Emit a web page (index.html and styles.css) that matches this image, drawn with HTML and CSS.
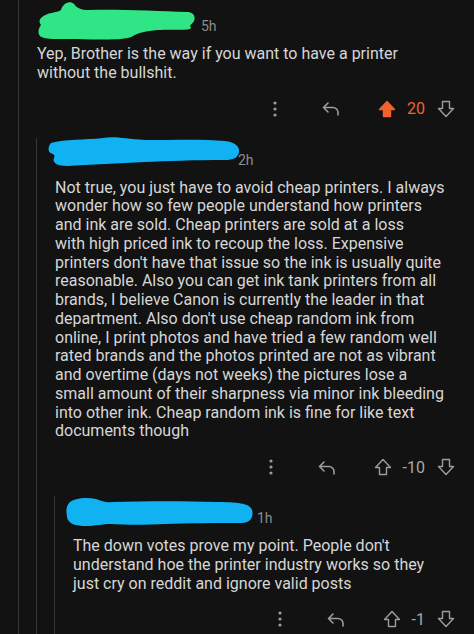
FILE: index.html
```html
<!DOCTYPE html>
<html lang="en">

<head>
    <meta charset="UTF-8">
    <meta name="viewport" content="width=device-width, initial-scale=1.0">
    <title>Comments</title>

    <link rel="stylesheet" href="styles.css">
</head>

<body>

    <section class="thread thread-root">
        <article class="comment">
            <header class="comment-head">
                <span class="user user-a">
                    <svg class="blob blob-a" viewBox="0 0 158 40" width="158" height="40">
                        <path fill="#2fe585"
                            d="M4 18 C10 12 20 13 24 10 C26 3 33 0 37 4 C40 8 44 10 52 10 C80 9 120 11 150 12 C156 12 159 16 157 21 C155 25 152 24 154 28 C152 31 140 29 120 30 C110 31 100 33 96 36 C90 40 70 40 40 39 C20 39 8 40 3 36 C0 32 2 28 4 25 C2 22 2 20 4 18 Z">
                        </path>
                    </svg>
                </span>
                <time class="age">5h</time>
            </header>
            <p class="comment-body">Yep, Brother is the way if you want to have a printer<br>without the bullshit.</p>
            <footer class="actions">
                <span class="more">
                    <svg viewBox="0 0 4 16" width="4" height="16">
                        <circle cx="2" cy="2" r="1.6" fill="currentColor"></circle>
                        <circle cx="2" cy="8" r="1.6" fill="currentColor"></circle>
                        <circle cx="2" cy="14" r="1.6" fill="currentColor"></circle>
                    </svg>
                </span>
                <span class="reply">
                    <svg viewBox="0 0 20 17" width="20" height="17">
                        <path fill="none" stroke="currentColor" stroke-width="1.6" stroke-linecap="round"
                            stroke-linejoin="round" d="M7 3 L2.5 7.5 L7 12 M2.5 7.5 H12 A5 5 0 0 1 17 12.5 V15"></path>
                    </svg>
                </span>
                <span class="vote up voted">
                    <svg viewBox="0 0 18 18" width="18" height="18">
                        <path fill="currentColor" stroke="currentColor" stroke-width="1.4" stroke-linejoin="round"
                            d="M9 1.5 L1.5 9.5 H5.5 V16.5 H12.5 V9.5 H16.5 Z"></path>
                    </svg>
                </span>
                <span class="score voted">20</span>
                <span class="vote down">
                    <svg viewBox="0 0 18 18" width="18" height="18">
                        <path fill="none" stroke="currentColor" stroke-width="1.4" stroke-linejoin="round"
                            d="M9 16.5 L1.5 8.5 H5.5 V1.5 H12.5 V8.5 H16.5 Z"></path>
                    </svg>
                </span>
            </footer>

            <section class="thread">
                <article class="comment">
                    <header class="comment-head">
                        <span class="user user-b">
                            <svg class="blob blob-b" viewBox="0 0 195 32" width="195" height="32">
                                <path fill="#10b2f2"
                                    d="M6 8 C20 4 40 5 58 3 C70 1 80 4 100 5 C130 5 160 4 180 6 C190 7 195 12 194 17 C193 23 188 25 180 25 C150 25 120 26 100 27 C80 28 60 29 40 30 C25 31 14 32 10 28 C6 24 12 22 8 19 C3 18 2 13 6 8 Z">
                                </path>
                            </svg>
                        </span>
                        <time class="age">2h</time>
                    </header>
                    <p class="comment-body">Not true, you just have to avoid cheap printers. I always<br>wonder how so few
                        people understand how printers<br>and ink are sold. Cheap printers are sold at a loss<br>with high
                        priced ink to recoup the loss. Expensive<br>printers don't have that issue so the ink is usually
                        quite<br>reasonable. Also you can get ink tank printers from all<br>brands, I believe Canon is
                        currently the leader in that<br>department. Also don't use cheap random ink from<br>online, I print
                        photos and have tried a few random well<br>rated brands and the photos printed are not as
                        vibrant<br>and overtime (days not weeks) the pictures lose a<br>small amount of their sharpness via
                        minor ink bleeding<br>into other ink. Cheap random ink is fine for like text<br>documents though</p>
                    <footer class="actions">
                        <span class="more">
                            <svg viewBox="0 0 4 16" width="4" height="16">
                                <circle cx="2" cy="2" r="1.6" fill="currentColor"></circle>
                                <circle cx="2" cy="8" r="1.6" fill="currentColor"></circle>
                                <circle cx="2" cy="14" r="1.6" fill="currentColor"></circle>
                            </svg>
                        </span>
                        <span class="reply">
                            <svg viewBox="0 0 20 17" width="20" height="17">
                                <path fill="none" stroke="currentColor" stroke-width="1.6" stroke-linecap="round"
                                    stroke-linejoin="round" d="M7 3 L2.5 7.5 L7 12 M2.5 7.5 H12 A5 5 0 0 1 17 12.5 V15">
                                </path>
                            </svg>
                        </span>
                        <span class="vote up">
                            <svg viewBox="0 0 18 18" width="18" height="18">
                                <path fill="none" stroke="currentColor" stroke-width="1.4" stroke-linejoin="round"
                                    d="M9 1.5 L1.5 9.5 H5.5 V16.5 H12.5 V9.5 H16.5 Z"></path>
                            </svg>
                        </span>
                        <span class="score">-10</span>
                        <span class="vote down">
                            <svg viewBox="0 0 18 18" width="18" height="18">
                                <path fill="none" stroke="currentColor" stroke-width="1.4" stroke-linejoin="round"
                                    d="M9 16.5 L1.5 8.5 H5.5 V1.5 H12.5 V8.5 H16.5 Z"></path>
                            </svg>
                        </span>
                    </footer>

                    <section class="thread">
                        <article class="comment">
                            <header class="comment-head">
                                <span class="user user-c">
                                    <svg class="blob blob-c" viewBox="0 0 187 29" width="187" height="29">
                                        <path fill="#10b2f2"
                                            d="M3 6 C8 1 20 0 30 2 C36 4 40 6 46 5 C80 4 120 4 150 5 C170 5 184 6 186 13 C188 20 184 26 176 26 C150 26 120 26 100 27 C80 28 60 28 45 27 C35 27 30 29 20 29 C10 29 2 27 1 20 C0 14 0 10 3 6 Z">
                                        </path>
                                    </svg>
                                </span>
                                <time class="age">1h</time>
                            </header>
                            <p class="comment-body">The down votes prove my point. People don't<br>understand hoe the printer
                                industry works so they<br>just cry on reddit and ignore valid posts</p>
                            <footer class="actions">
                                <span class="more">
                                    <svg viewBox="0 0 4 16" width="4" height="16">
                                        <circle cx="2" cy="2" r="1.6" fill="currentColor"></circle>
                                        <circle cx="2" cy="8" r="1.6" fill="currentColor"></circle>
                                        <circle cx="2" cy="14" r="1.6" fill="currentColor"></circle>
                                    </svg>
                                </span>
                                <span class="reply">
                                    <svg viewBox="0 0 20 17" width="20" height="17">
                                        <path fill="none" stroke="currentColor" stroke-width="1.6"
                                            stroke-linecap="round" stroke-linejoin="round"
                                            d="M7 3 L2.5 7.5 L7 12 M2.5 7.5 H12 A5 5 0 0 1 17 12.5 V15"></path>
                                    </svg>
                                </span>
                                <span class="vote up">
                                    <svg viewBox="0 0 18 18" width="18" height="18">
                                        <path fill="none" stroke="currentColor" stroke-width="1.4"
                                            stroke-linejoin="round" d="M9 1.5 L1.5 9.5 H5.5 V16.5 H12.5 V9.5 H16.5 Z">
                                        </path>
                                    </svg>
                                </span>
                                <span class="score">-1</span>
                                <span class="vote down">
                                    <svg viewBox="0 0 18 18" width="18" height="18">
                                        <path fill="none" stroke="currentColor" stroke-width="1.4"
                                            stroke-linejoin="round" d="M9 16.5 L1.5 8.5 H5.5 V1.5 H12.5 V8.5 H16.5 Z">
                                        </path>
                                    </svg>
                                </span>
                            </footer>
                        </article>
                    </section>
                </article>
            </section>
        </article>
    </section>

</body>

</html>
```

FILE: styles.css
```css
*,
*::before,
*::after {
    box-sizing: border-box;
}

body {
    margin: 0;
    padding: 0;
    min-height: 100vh;
    background-color: #121212;
    color: #d6d6d6;
    font-family: Roboto, "Liberation Sans", Arial, sans-serif;
}

/* thread guide lines */
.thread {
    border-left: 1px solid #363636;
    margin-left: -1px;
    margin-top: 9px;
}

.thread-root {
    margin: 0 0 0 18px;
    padding-top: 4px;
    min-height: 100vh;
}

.comment {
    padding: 7px 0 0 18px;
}

.thread-root>.comment {
    padding-right: 19px;
}

.comment-head {
    position: relative;
    font-size: 14px;
    line-height: 20px;
    margin-bottom: 9px;
    display: flex;
    align-items: baseline;
}

.user {
    display: inline-block;
    height: 20px;
}

.user-a {
    width: 160px;
}

.user-b {
    width: 179px;
}

.user-c {
    width: 180px;
}

/* scribble drawn over the user name */
.blob {
    position: absolute;
    display: block;
}

.blob-a {
    left: 0;
    top: -11px;
}

.blob-b {
    left: -10px;
    top: -10px;
}

.blob-c {
    left: -7px;
    top: -6px;
}

.age {
    margin-left: 4px;
    color: #8c8c8c;
}

.comment-body {
    margin: 0;
    font-size: 16px;
    line-height: 18.75px;
    white-space: nowrap;
}

.actions {
    display: flex;
    justify-content: flex-end;
    align-items: center;
    height: 40px;
    margin-top: 6px;
    color: #9c9c9c;
}

.actions svg {
    display: block;
}

.more {
    margin-right: 44px;
}

.reply {
    margin-right: 37px;
}

.score {
    font-size: 16px;
    margin: 0 12px 0 11px;
    color: #a8a8a8;
}

.voted {
    color: #f2622d;
}

.score.voted {
    color: #f2622d;
}
```
